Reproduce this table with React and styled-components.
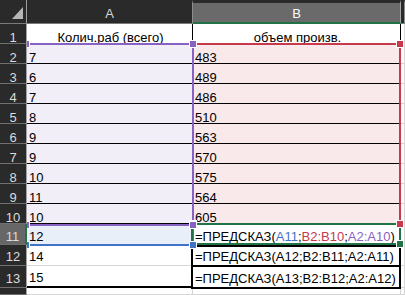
import React from "react"
import styled, { createGlobalStyle, css } from "styled-components"

const GlobalStyle = createGlobalStyle`
  html, body {
    margin: 0;
    padding: 0;
    background: #fff;
  }
  body {
    font-family: "Liberation Sans", Arial, sans-serif;
  }
`

const BLUE = "#3f74c9"
const RED = "#c63a4b"
const PURPLE = "#8762c2"
const GREEN = "#217346"

// column and row sizes of the visible part of the sheet
const colWidths = [27, 166, 208]
const rowHeights = [24, 20, 20, 20, 20, 20, 20, 20, 20, 20, 20, 21, 21, 22]

const edges = sizes =>
  sizes.reduce((acc, s) => [...acc, acc[acc.length - 1] + s], [0])
const colX = edges(colWidths)
const rowY = edges(rowHeights)

const rect = (left, top, right, bottom) => ({
  left,
  top,
  width: right - left,
  height: bottom - top,
})

const Sheet = styled.div`
  position: relative;
  width: 405px;
  height: 295px;
  overflow: hidden;
  display: grid;
  grid-template-columns: ${colWidths.map(w => w + "px").join(" ")} 1fr;
  grid-template-rows: ${rowHeights.map(h => h + "px").join(" ")} 1fr;
  font-size: 13px;
  color: #000;
`

const Corner = styled.div`
  box-sizing: border-box;
  background: #2a2a2a;
  border-right: 1px solid #9d9d9d;
  border-bottom: 1px solid #7a7a7a;
  display: flex;
  align-items: flex-end;
  justify-content: flex-end;
  padding: 0 3px 4px 0;
  position: relative;
  z-index: 5;

  &::after {
    content: "";
    width: 0;
    height: 0;
    border-left: 11px solid transparent;
    border-bottom: 12px solid #b5b5b5;
  }
`

const ColHead = styled.div`
  box-sizing: border-box;
  border-top: 3px solid #2a2a2a;
  background: ${p => (p.$active ? "#6a6a6a" : "#2a2a2a")};
  color: ${p => (p.$active ? "#fff" : "#d6d6d6")};
  border-right: 1px solid ${p => (p.$active ? "#a8a8a8" : "#8d8d8d")};
  border-bottom: ${p =>
    p.$active ? `2px solid ${GREEN}` : "1px solid #7a7a7a"};
  display: flex;
  align-items: flex-end;
  justify-content: center;
  line-height: 11px;
  padding-bottom: ${p => (p.$active ? 3 : 4)}px;
`

const RowHead = styled.div`
  box-sizing: border-box;
  position: relative;
  z-index: 5;
  background: ${p => (p.$active ? "#676767" : "#2a2a2a")};
  color: #dcdcdc;
  border-bottom: 1px solid #6f6f6f;
  border-right: ${p =>
    p.$active ? `2px solid ${GREEN}` : "1px solid #a3a3a3"};
  display: flex;
  align-items: flex-end;
  justify-content: center;
  line-height: 11px;
  padding-bottom: ${p => p.$lift}px;
`

const Cell = styled.div`
  box-sizing: border-box;
  background: ${p => p.$fill || "#fff"};
  border-right: 1px solid ${p => (p.$table ? "#000" : "#d6d6d6")};
  border-bottom: 1px solid ${p => (p.$table ? "#000" : "#d6d6d6")};
  display: flex;
  align-items: flex-end;
  justify-content: ${p => (p.$center ? "center" : "flex-start")};
  padding: 0 0 ${p => p.$lift}px 2px;
  line-height: 11px;
  white-space: nowrap;
  overflow: hidden;
  ${p =>
    p.$closing &&
    css`
      border-bottom: 2px solid #000;
    `}
`

const Ref = styled.span`
  color: ${p => p.$color};
`

const RangeBox = styled.div`
  position: absolute;
  box-sizing: border-box;
  border: 2px solid ${p => p.$color};
  pointer-events: none;
`

const Handle = styled.div`
  position: absolute;
  z-index: 3;
  width: 6px;
  height: 6px;
  background: ${p => p.$color};
  box-shadow: 0 0 0 1px #fff;
  ${p => (p.$corner.includes("t") ? "top: -4px;" : "bottom: -4px;")}
  ${p => (p.$corner.includes("l") ? "left: -4px;" : "right: -4px;")}
`

const Range = ({ color, box, corners = ["tl", "tr", "bl", "br"] }) => (
  <RangeBox $color={color} style={box}>
    {corners.map(c => (
      <Handle key={c} $color={color} $corner={c} />
    ))}
  </RangeBox>
)

const rows = [
  { a: "Колич.раб (всего)", b: "объем произв.", title: true },
  { a: "7", b: "483" },
  { a: "6", b: "489" },
  { a: "7", b: "486" },
  { a: "8", b: "510" },
  { a: "9", b: "563" },
  { a: "9", b: "570" },
  { a: "10", b: "575" },
  { a: "11", b: "564" },
  { a: "10", b: "605" },
  {
    a: "12",
    b: (
      <>
        =ПРЕДСКАЗ(<Ref $color={BLUE}>A11</Ref>;<Ref $color={RED}>B2:B10</Ref>;
        <Ref $color={PURPLE}>A2:A10</Ref>)
      </>
    ),
    lift: 2,
  },
  { a: "14", b: "=ПРЕДСКАЗ(A12;B2:B11;A2:A11)", lift: 3 },
  { a: "15", b: "=ПРЕДСКАЗ(A13;B2:B12;A2:A12)", lift: 3 },
]

const App = () => {
  return (
    <>
      <GlobalStyle />
      <Sheet>
        <Corner />
        <ColHead>A</ColHead>
        <ColHead $active>B</ColHead>
        <ColHead />

        {rows.map((row, i) => {
          const n = i + 1
          const lift = row.lift ?? 0
          const inTable = n <= 10
          const data = n >= 2 && n <= 10
          return (
            <React.Fragment key={n}>
              <RowHead $active={n === 11} $lift={lift}>
                {n}
              </RowHead>
              <Cell
                $table={inTable}
                $center={row.title}
                $fill={data ? "#f1eef8" : n === 11 ? "#e9eff9" : undefined}
                $closing={n === 13}
                $lift={lift}
              >
                {row.a}
              </Cell>
              <Cell
                $table={inTable}
                $center={row.title}
                $fill={data ? "#f9e9ea" : undefined}
                $lift={lift}
              >
                {row.b}
              </Cell>
              <Cell $lift={lift} />
            </React.Fragment>
          )
        })}

        <RowHead $lift={0} />
        <Cell $lift={0} />
        <Cell $lift={0} />
        <Cell $lift={0} />

        <Range
          color={BLUE}
          box={rect(colX[1] - 2, rowY[11], colX[2] + 1, rowY[12] + 1)}
        />
        <Range
          color={RED}
          box={rect(colX[2] - 1, rowY[2] - 1, colX[3], rowY[11] + 1)}
        />
        <Range
          color={PURPLE}
          box={rect(colX[1] - 2, rowY[2] - 1, colX[2] + 1, rowY[11] + 2)}
        />
        <RangeBox
          $color="#000"
          style={rect(colX[2] - 2, rowY[12], colX[3], rowY[13] + 1)}
        />
        <RangeBox
          $color="#000"
          style={rect(colX[2] - 2, rowY[13] - 1, colX[3], rowY[14] + 1)}
        />
        <Range
          color={GREEN}
          corners={["br"]}
          box={rect(colX[2] - 2, rowY[11] - 1, colX[3], rowY[12])}
        />
      </Sheet>
    </>
  )
}

export default App
